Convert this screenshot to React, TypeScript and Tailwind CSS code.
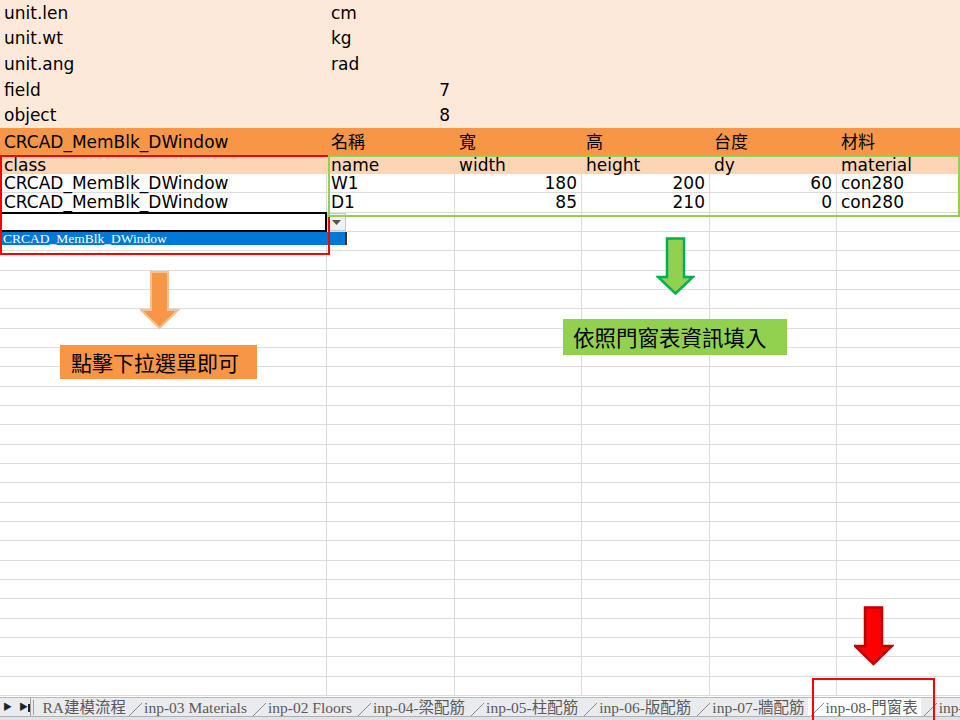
import React from "react";

const COLS = "grid grid-cols-[327px_128px_127px_128px_127px_123px]";

function MetaRow({ a, b, c }: { a: string; b?: string; c?: string }) {
  return (
    <div className={`${COLS} h-[25.6px] items-center`}>
      <div className="pl-[4px] whitespace-nowrap">{a}</div>
      <div className={`pl-[4px] pr-[5px] ${c ? "text-right" : ""}`}>{c ?? b ?? ""}</div>
      <div />
      <div />
      <div />
      <div />
    </div>
  );
}

function Cell({ children, right, last }: { children?: React.ReactNode; right?: boolean; last?: boolean }) {
  return (
    <div
      className={`h-full border-b border-[#dcdcdc] ${last ? "" : "border-r"} flex items-center whitespace-nowrap px-[4px] ${right ? "justify-end" : ""}`}
    >
      {children}
    </div>
  );
}

function DataRow({ cells }: { cells: (string | number)[] }) {
  return (
    <div className={`${COLS} h-[19.33px] bg-white`}>
      <Cell>{cells[0]}</Cell>
      <Cell>{cells[1]}</Cell>
      <Cell right>{cells[2]}</Cell>
      <Cell right>{cells[3]}</Cell>
      <Cell right>{cells[4]}</Cell>
      <Cell last>{cells[5]}</Cell>
    </div>
  );
}

function EmptyRow() {
  return (
    <div className={`${COLS} h-[19.33px] bg-white`}>
      <Cell />
      <Cell />
      <Cell />
      <Cell />
      <Cell />
      <Cell last />
    </div>
  );
}

const tabs = [
  "RA建模流程",
  "inp-03 Materials",
  "inp-02 Floors",
  "inp-04-梁配筋",
  "inp-05-柱配筋",
  "inp-06-版配筋",
  "inp-07-牆配筋",
  "inp-08-門窗表",
  "inp-",
];

function Slant() {
  return (
    <svg width="17" height="20" viewBox="0 0 17 20" className="shrink-0">
      <path d="M2 19 L16 5" stroke="#8a8a8a" strokeWidth="1" fill="none" />
    </svg>
  );
}

export default function App() {
  const empties = Array.from({ length: 25 });
  return (
    <div className="relative w-[960px] h-[720px] overflow-hidden bg-white text-[17px] text-black font-['DejaVu_Sans','Noto_Sans_CJK_TC',sans-serif] leading-[18px]">
      {/* top meta rows */}
      <div className="bg-[#FDE9D9] h-[128px] flex flex-col">
        <MetaRow a="unit.len" b="cm" />
        <MetaRow a="unit.wt" b="kg" />
        <MetaRow a="unit.ang" b="rad" />
        <MetaRow a="field" c="7" />
        <MetaRow a="object" c="8" />
      </div>

      {/* orange header */}
      <div className={`${COLS} h-[27px] bg-[#F79646] items-center`}>
        <div className="pl-[4px] whitespace-nowrap">CRCAD_MemBlk_DWindow</div>
        <div className="pl-[4px]">名稱</div>
        <div className="pl-[4px]">寬</div>
        <div className="pl-[4px]">高</div>
        <div className="pl-[4px]">台度</div>
        <div className="pl-[4px]">材料</div>
      </div>

      {/* field names row */}
      <div className={`${COLS} h-[19px] bg-[#FCD5B4] items-center`}>
        <div className="pl-[4px]">class</div>
        <div className="pl-[4px]">name</div>
        <div className="pl-[4px]">width</div>
        <div className="pl-[4px]">height</div>
        <div className="pl-[4px]">dy</div>
        <div className="pl-[4px]">material</div>
      </div>

      <DataRow cells={["CRCAD_MemBlk_DWindow", "W1", 180, 200, 60, "con280"]} />
      <DataRow cells={["CRCAD_MemBlk_DWindow", "D1", 85, 210, 0, "con280"]} />
      {empties.map((_, i) => (
        <EmptyRow key={i} />
      ))}

      {/* sheet tab bar */}
      <div className="absolute left-0 bottom-0 w-[960px] h-[23px] bg-[#e9ebee] border-t border-[#b9b9b9] flex items-start font-['Liberation_Serif','Noto_Sans_CJK_TC',serif] text-[15.5px] leading-none text-[#5a5a5a]">
        <div className="flex items-center h-[19px] w-[34px] gap-[7px] pl-[3px] text-[#222] text-[9px] border-r border-[#a0a0a0]">
          <span>▶</span>
          <span className="flex items-center">▶<span className="inline-block w-[1.5px] h-[8px] bg-[#222]" /></span>
        </div>
        <div className="flex items-start h-[19px] pl-[2px]">
          {tabs.map((t, i) => {
            const active = t === "inp-08-門窗表";
            return (
              <div key={t} className={`flex items-center h-[19px] ${active ? "bg-white" : ""}`}>
                {i > 0 && <Slant />}
                <span
                  className={`whitespace-nowrap ${i === 0 ? "border-l border-[#a0a0a0] pl-[9px] pr-[0px]" : "pl-[1px] pr-[3px]"}`}
                >
                  {t}
                </span>
              </div>
            );
          })}
        </div>
        <div className="absolute left-0 bottom-0 w-[960px] h-[4px] bg-[#dfe2e6] border-t border-[#b0b0b0]" />
      </div>

      {/* dropdown in cell A5 */}
      <div className="absolute left-0 top-[212px] w-[327px] h-[20px] border-2 border-black bg-white" />
      <div className="absolute left-[327px] top-[213px] w-[19px] h-[18px] bg-[#f0f0f0] border border-[#c8c8c8] flex items-center justify-center">
        <svg width="9" height="5" viewBox="0 0 9 5"><path d="M0 0 L9 0 L4.5 5 Z" fill="#555" /></svg>
      </div>
      <div className="absolute left-0 top-[232px] w-[347px] h-[13px] bg-[#0078D7] border-r-2 border-[#333] flex items-center pl-[3px] text-white font-['Liberation_Serif',serif] text-[13.5px] leading-none">
        CRCAD_MemBlk_DWindow
      </div>

      {/* red selection box */}
      <div className="absolute left-0 top-[155px] w-[330px] h-[100px] border-2 border-[#FF0000]" />
      {/* green box */}
      <div className="absolute left-[328px] top-[155px] w-[632px] h-[62px] border-2 border-[#92D050]" />

      {/* orange arrow */}
      <svg className="absolute left-[140px] top-[271px]" width="40" height="59" viewBox="0 0 40 59">
        <path d="M11 1 L28 1 L28 39 L38 39 L19.5 57 L1 39 L11 39 Z" fill="#F79646" stroke="#FAC090" strokeWidth="2" />
      </svg>
      <div className="absolute left-[60px] top-[345px] w-[197px] h-[34px] bg-[#F79646] flex items-center pl-[11px] text-[21px] leading-none font-['Noto_Sans_CJK_TC',sans-serif] text-black">
        點擊下拉選單即可
      </div>

      {/* green arrow */}
      <svg className="absolute left-[656px] top-[237px]" width="39" height="59" viewBox="0 0 39 59">
        <path d="M11 1.5 L28 1.5 L28 40 L37 40 L19.5 56.5 L2 40 L11 40 Z" fill="#92D050" stroke="#00B050" strokeWidth="2.5" />
      </svg>
      <div className="absolute left-[563px] top-[319px] w-[224px] h-[36px] bg-[#92D050] flex items-center pl-[10px] text-[21.5px] leading-none font-['Noto_Sans_CJK_TC',sans-serif] text-black">
        依照門窗表資訊填入
      </div>

      {/* red arrow */}
      <svg className="absolute left-[854px] top-[606px]" width="40" height="60" viewBox="0 0 40 60">
        <path d="M11 1.5 L28 1.5 L28 40 L38 40 L19.5 58 L1 40 L11 40 Z" fill="#FF0000" stroke="#C00000" strokeWidth="2.5" />
      </svg>
      {/* red box around tab */}
      <div className="absolute left-[812px] top-[678px] w-[123px] h-[46px] border-2 border-[#FF0000]" />
    </div>
  );
}
